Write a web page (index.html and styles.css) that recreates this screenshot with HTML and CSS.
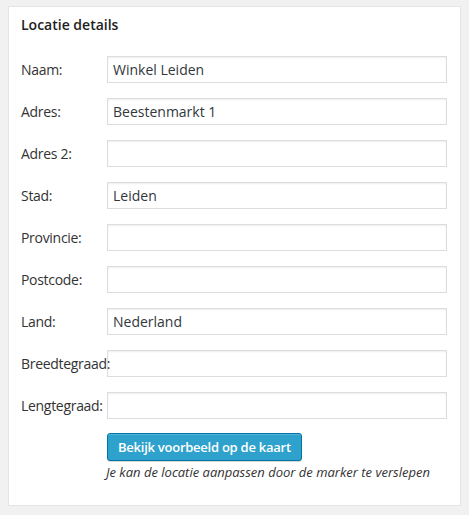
FILE: index.html
```html
<!DOCTYPE html>
<html>
<head>
<meta charset="utf-8">
<link rel="stylesheet" href="styles.css">
</head>
<body>
<div class="postbox">
  <h3 class="hndle">Locatie details</h3>
  <div class="inside">
    <div class="form">
      <label class="lbl">Naam:</label><input class="field" type="text" value="Winkel Leiden">
      <label class="lbl">Adres:</label><input class="field" type="text" value="Beestenmarkt 1">
      <label class="lbl">Adres 2:</label><input class="field" type="text" value="">
      <label class="lbl">Stad:</label><input class="field" type="text" value="Leiden">
      <label class="lbl">Provincie:</label><input class="field" type="text" value="">
      <label class="lbl">Postcode:</label><input class="field" type="text" value="">
      <label class="lbl">Land:</label><input class="field" type="text" value="Nederland">
      <label class="lbl">Breedtegraad:</label><input class="field" type="text" value="">
      <label class="lbl">Lengtegraad:</label><input class="field" type="text" value="">
    </div>
    <div class="actions">
      <button class="button-primary" type="button">Bekijk voorbeeld op de kaart</button>
      <p class="desc">Je kan de locatie aanpassen door de marker te verslepen</p>
    </div>
  </div>
</div>
</body>
</html>
```

FILE: styles.css
```css
html, body {
  margin: 0;
  padding: 0;
  background: #f1f1f1;
}
body {
  padding: 6px 8px 0 8px;
  font-family: "Open Sans", "Noto Sans", sans-serif;
  color: #444;
}
.postbox {
  width: 451px;
  background: #fff;
  border: 1px solid #e5e5e5;
  box-shadow: 0 1px 1px rgba(0, 0, 0, 0.04);
}
.hndle {
  margin: 0;
  padding: 8px 12px;
  font-size: 14px;
  line-height: 20px;
  font-weight: 600;
  color: #222;
}
.inside {
  padding: 13px 12px 24px 12px;
}
.form {
  display: grid;
  grid-template-columns: 86px 340px;
  row-gap: 15px;
  align-items: center;
}
.lbl {
  position: relative;
  z-index: 1;
  font-size: 14px;
  color: #333;
  white-space: nowrap;
  line-height: 20px;
  letter-spacing: -0.3px;
}
.field {
  box-sizing: border-box;
  width: 340px;
  height: 27px;
  margin: 0;
  padding: 3px 5px;
  border: 1px solid #ddd;
  box-shadow: inset 0 1px 2px rgba(0, 0, 0, 0.07);
  font-family: "Open Sans", "Noto Sans", sans-serif;
  font-size: 14px;
  color: #32373c;
  background: #fff;
  outline: none;
}
.actions {
  margin-top: 14px;
  padding-left: 85px;
}
.button-primary {
  display: block;
  height: 28px;
  margin: 0 0 0 1px;
  padding: 0 10px 1px;
  background: #2ea2cc;
  border: 1px solid #0074a2;
  border-radius: 3px;
  box-shadow: inset 0 1px 0 rgba(120, 200, 230, 0.5), 0 1px 0 rgba(0, 0, 0, 0.15);
  color: #fff;
  font-family: "Open Sans", "Noto Sans", sans-serif;
  font-size: 13px;
  font-weight: 600;
  line-height: 26px;
  letter-spacing: -0.25px;
}
.desc {
  margin: 2px 0 0 0;
  font-size: 13px;
  font-style: italic;
  line-height: 18px;
  color: #333;
}
```
